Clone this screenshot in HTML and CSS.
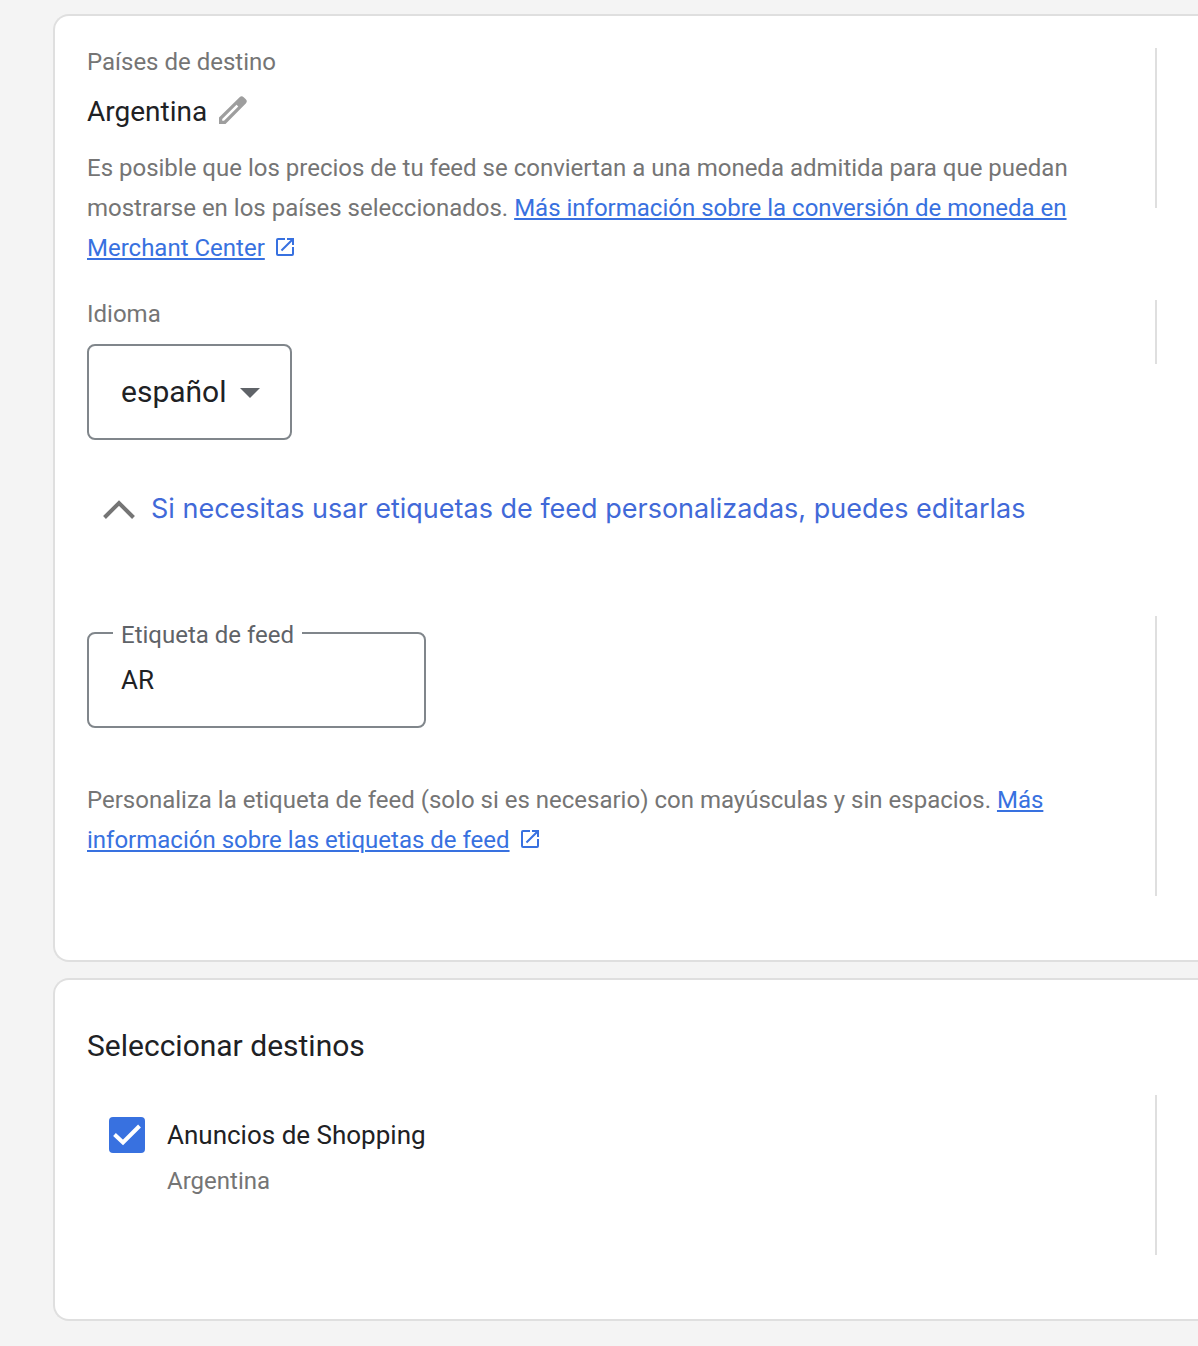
FILE: index.html
```html
<!DOCTYPE html>
<html lang="es">
<head>
    <meta charset="utf-8">
    <meta name="viewport" content="width=device-width, initial-scale=1">
    <title>Configuración del feed</title>
    <link rel="stylesheet" href="styles.css">
</head>

<body>
    <main class="page">
        <section class="card">
            <div class="row">
                <div class="content">
                    <h3 class="label">Países de destino</h3>
                    <div class="country">
                        <span>Argentina</span>
                        <button type="button" class="edit_btn" aria-label="Editar">
                            <svg width="28" height="28" viewBox="0 0 28 28">
                                <path fill="#9e9e9e" fill-rule="evenodd" d="M0 28v-6.500L20.600 1.200Q22.600-.7 24.700 1.200L26.800 3.300Q28.800 5.300 26.800 7.400L6.500 28ZM3.200 24.800H5L19.300 10.500 17.500 8.700 3.200 23Z"/>
                            </svg>
                        </button>
                    </div>
                    <p class="help">Es posible que los precios de tu feed se conviertan a una moneda admitida para que puedan mostrarse en los países seleccionados. <a href="#">Más información sobre la conversión de moneda en Merchant Center</a><svg class="ext" viewBox="0 0 24 24"><path d="M19 19H5V5h7V3H5a2 2 0 0 0-2 2v14a2 2 0 0 0 2 2h14a2 2 0 0 0 2-2v-7h-2v7zM14 3v2h3.590l-9.830 9.830 1.410 1.410L19 6.410V10h2V3h-7z"/></svg></p>
                </div>
                <div class="divider"></div>
            </div>

            <div class="row">
                <div class="content">
                    <label class="label" for="idioma">Idioma</label>
                    <div class="select_box">
                        <select id="idioma">
                            <option>español</option>
                        </select>
                        <svg class="arrow" width="20" height="10" viewBox="0 0 20 10"><path fill="#5f6368" d="M0 0h20L10 10z"/></svg>
                    </div>
                    <button type="button" class="expander" aria-expanded="true">
                        <svg width="32" height="20" viewBox="0 0 32 20"><path fill="none" stroke="#757575" stroke-width="4" d="M1.500 18.500L16 4l14.500 14.500"/></svg>
                        <span>Si necesitas usar etiquetas de feed personalizadas, puedes editarlas</span>
                    </button>
                </div>
                <div class="divider small"></div>
            </div>

            <div class="row">
                <div class="content">
                    <div class="field">
                        <label for="etiqueta">Etiqueta de feed</label>
                        <input type="text" id="etiqueta" value="AR">
                    </div>
                    <p class="help">Personaliza la etiqueta de feed (solo si es necesario) con mayúsculas y sin espacios. <a href="#">Más información sobre las etiquetas de feed</a><svg class="ext" viewBox="0 0 24 24"><path d="M19 19H5V5h7V3H5a2 2 0 0 0-2 2v14a2 2 0 0 0 2 2h14a2 2 0 0 0 2-2v-7h-2v7zM14 3v2h3.590l-9.830 9.830 1.410 1.410L19 6.410V10h2V3h-7z"/></svg></p>
                </div>
                <div class="divider large"></div>
            </div>
        </section>

        <section class="card">
            <h2 class="title">Seleccionar destinos</h2>
            <div class="row">
                <div class="content">
                    <div class="check">
                        <span class="check_box">
                            <input type="checkbox" id="shopping" checked>
                            <svg width="36" height="36" viewBox="0 0 36 36"><path fill="none" stroke="#fff" stroke-width="4" d="M5.500 17.500L14 25.500 30.500 9"/></svg>
                        </span>
                        <label for="shopping">Anuncios de Shopping</label>
                        <span class="sub">Argentina</span>
                    </div>
                </div>
                <div class="divider"></div>
            </div>
        </section>
    </main>
</body>

</html>
```

FILE: styles.css
```css
* {
    box-sizing: border-box;
    margin: 0;
    padding: 0;
}
body {
    background-color: #f4f4f4;
    color: #202124;
    font-family: Roboto, "Liberation Sans", sans-serif;
    font-size: 24px;
    line-height: 28px;
}
.page {
    display: flex;
    flex-direction: column;
    gap: 16px;
    padding: 14px 0 24px 53px;
}
.card {
    display: flex;
    flex-direction: column;
    gap: 32px;
    padding: 32px 0 64px 32px;
    background-color: #fff;
    border: 2px solid #dfdfdf;
    border-right: none;
    border-radius: 16px 0 0 16px;
}
.row {
    display: grid;
    grid-template-columns: 1fr 43px;
    align-items: start;
}
.divider {
    height: 160px;
    border-left: 2px solid #dfdfdf;
}
.divider.small {
    height: 64px;
}
.divider.large {
    height: 280px;
}
.label {
    display: block;
    color: #757575;
    font-size: 24px;
    font-weight: 400;
}
.country {
    display: flex;
    align-items: flex-end;
    gap: 12px;
    margin: 20px 0 24px;
    font-size: 28px;
    line-height: 24px;
}
.edit_btn {
    height: 28px;
    border: none;
    background: none;
    cursor: pointer;
}
.edit_btn svg {
    display: block;
}
.help {
    padding-right: 64px;
    color: #757575;
    line-height: 40px;
}
.help a {
    color: #3871e0;
    text-decoration-thickness: 2px;
    text-underline-offset: 2px;
}
.ext {
    width: 24px;
    height: 24px;
    margin-left: 8px;
    vertical-align: -3px;
    fill: #3871e0;
}
.select_box {
    position: relative;
    width: fit-content;
    margin-top: 16px;
}
.select_box select {
    display: block;
    height: 96px;
    padding: 0 63px 2px 32px;
    appearance: none;
    border: 2px solid #80868b;
    border-radius: 8px;
    background-color: #fff;
    color: #202124;
    font-family: inherit;
    font-size: 30px;
}
.arrow {
    position: absolute;
    top: 44px;
    right: 32px;
    pointer-events: none;
}
.expander {
    display: flex;
    align-items: center;
    gap: 16px;
    margin: 49px 0 55px 16px;
    border: none;
    background: none;
    color: #4169d8;
    font-family: Inter, Roboto, sans-serif;
    font-size: 27px;
    line-height: 40px;
    text-align: left;
    cursor: pointer;
}
.expander svg {
    flex: none;
}
.field {
    position: relative;
    max-width: 339px;
    margin: 16px 0 52px;
}
.field label {
    position: absolute;
    top: -11px;
    left: 26px;
    padding: 0 8px;
    background-color: #fff;
    color: #5f6368;
}
.field input {
    display: block;
    width: 100%;
    height: 96px;
    padding: 0 32px;
    border: 2px solid #80868b;
    border-radius: 8px;
    color: #202124;
    font-family: inherit;
    font-size: 26px;
}
.title {
    padding-top: 17px;
    font-size: 30px;
    font-weight: 400;
    line-height: 34px;
}
.check {
    display: grid;
    grid-template-columns: 36px 1fr;
    column-gap: 22px;
    row-gap: 14px;
    align-items: center;
    padding: 22px 0 0 22px;
    font-size: 26px;
}
.check_box {
    position: relative;
    height: 36px;
}
.check_box input {
    display: block;
    width: 36px;
    height: 36px;
    appearance: none;
    border-radius: 4px;
    background-color: #3871e0;
}
.check_box svg {
    position: absolute;
    top: 0;
    left: 0;
    pointer-events: none;
}
.sub {
    grid-column: 2;
    color: #757575;
    font-size: 24px;
}
```
